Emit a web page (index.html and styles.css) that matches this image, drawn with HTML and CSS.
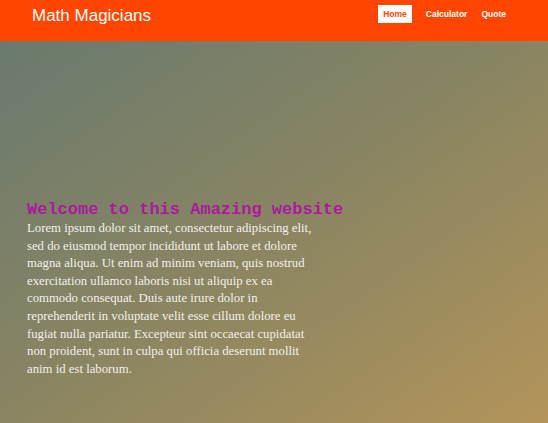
FILE: index.html
```html
<!DOCTYPE html>
<html>
<head>
<meta charset="utf-8">
<link rel="stylesheet" href="styles.css">
</head>
<body>
<header class="topbar">
  <div class="brand">Math Magicians</div>
  <nav class="nav">
    <a class="nav-link active" href="#">Home</a>
    <a class="nav-link" href="#">Calculator</a>
    <a class="nav-link" href="#">Quote</a>
  </nav>
</header>
<main class="hero">
  <section class="intro">
    <h1 class="intro-title">Welcome to this Amazing website</h1>
    <p class="intro-text">Lorem ipsum dolor sit amet, consectetur adipiscing elit, sed do eiusmod tempor incididunt ut labore et dolore magna aliqua. Ut enim ad minim veniam, quis nostrud exercitation ullamco laboris nisi ut aliquip ex ea commodo consequat. Duis aute irure dolor in reprehenderit in voluptate velit esse cillum dolore eu fugiat nulla pariatur. Excepteur sint occaecat cupidatat non proident, sunt in culpa qui officia deserunt mollit anim id est laborum.</p>
  </section>
</main>
</body>
</html>
```
FILE: styles.css
```css
* { box-sizing: border-box; }
html, body { margin: 0; padding: 0; height: 100%; }
body {
  font-family: "Liberation Sans", Arial, sans-serif;
  display: flex;
  flex-direction: column;
}
.topbar {
  height: 41px;
  flex: none;
  background: #ff4500;
  display: flex;
  align-items: flex-start;
  justify-content: space-between;
  padding: 0 42px 0 32px;
}
.brand {
  color: #fff;
  font-size: 17px;
  line-height: 20px;
  margin-top: 6px;
}
.nav {
  display: flex;
  gap: 14px;
  margin-top: 5px;
}
.nav-link {
  color: #fff;
  font-size: 8.5px;
  font-weight: bold;
  text-decoration: none;
  line-height: 18px;
  height: 18px;
}
.nav-link.active {
  background: #fff;
  color: #ff4500;
  padding: 0 5px;
}
.hero {
  flex: 1;
  background: linear-gradient(to bottom right, #6a7a6f 0%, #8a8562 50%, #b3945a 100%);
  padding: 159px 0 0 27px;
}
.intro { width: 290px; }
.intro-title {
  margin: 0;
  font-family: "Liberation Mono", "Courier New", monospace;
  font-size: 17px;
  font-weight: bold;
  line-height: 20px;
  color: #ab1a9c;
  white-space: nowrap;
}
.intro-text {
  margin: 0;
  font-family: "Liberation Serif", "Times New Roman", serif;
  font-size: 12.75px;
  line-height: 17.6px;
  color: #f4f0ea;
}
```
